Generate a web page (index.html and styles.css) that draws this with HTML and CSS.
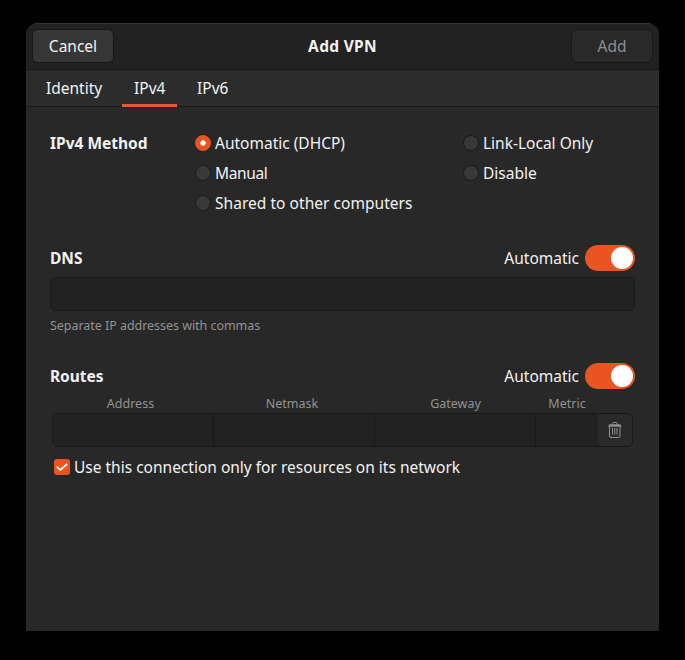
FILE: index.html
```html
<!DOCTYPE html>
<html lang="en">
<head>
<meta charset="utf-8">
<title>Add VPN</title>
<link rel="stylesheet" href="styles.css">
</head>
<body>
<main class="window">
  <header class="headerbar">
    <button class="button">Cancel</button>
    <h1 class="title">Add VPN</h1>
    <button class="button button-disabled" disabled>Add</button>
  </header>
  <nav class="tabs">
    <a class="tab tab-identity">Identity</a>
    <a class="tab tab-active">IPv4</a>
    <a class="tab">IPv6</a>
  </nav>
  <div class="page">
    <section class="methods">
      <h2 class="heading">IPv4 Method</h2>
      <div class="radio-column">
        <label class="option"><span class="radio radio-on"></span><span>Automatic (DHCP)</span></label>
        <label class="option"><span class="radio"></span><span class="label-manual">Manual</span></label>
        <label class="option"><span class="radio"></span><span class="label-shared">Shared to other computers</span></label>
      </div>
      <div class="radio-column">
        <label class="option"><span class="radio"></span><span>Link-Local Only</span></label>
        <label class="option"><span class="radio"></span><span>Disable</span></label>
      </div>
    </section>
    <section class="dns">
      <div class="section-head">
        <h2 class="heading">DNS</h2>
        <span class="auto">Automatic</span>
        <span class="switch"><span class="knob"></span></span>
      </div>
      <div class="entry"></div>
      <p class="hint">Separate IP addresses with commas</p>
    </section>
    <section class="routes">
      <div class="section-head">
        <h2 class="heading heading-routes">Routes</h2>
        <span class="auto">Automatic</span>
        <span class="switch"><span class="knob"></span></span>
      </div>
      <div class="columns column-names">
        <span>Address</span><span>Netmask</span><span>Gateway</span><span>Metric</span>
      </div>
      <div class="columns route-row">
        <span class="cell"></span><span class="cell"></span><span class="cell"></span><span class="cell cell-last"></span>
        <span class="delete">
          <svg width="14" height="16" viewBox="0 0 14 16" fill="none" stroke="#929292">
            <path d="M4.5 2.5V1.5Q4.5.5 5.5.5H8Q9 .5 9 1.5V2.5"/>
            <path d="M.3 4.8V4Q.3 2.2 2 2.2H11.5Q13.2 2.2 13.2 4V4.8Z" fill="#929292" stroke="none"/>
            <path d="M1.5 5V14Q1.5 15.5 3 15.5H10.5Q12 15.5 12 14V5"/>
            <path d="M4.5 6V12.5M6.75 6V12.5M9 6V12.5"/>
          </svg>
        </span>
      </div>
      <label class="check-row">
        <svg class="check" width="16" height="16" viewBox="0 0 16 16">
          <rect width="16" height="16" rx="3" fill="#e95420"/>
          <path d="M2.8 7.6L6.4 11L13.2 4.8" fill="none" stroke="#fff" stroke-width="1.7"/>
        </svg>
        <span>Use this connection only for resources on its network</span>
      </label>
    </section>
  </div>
</main>
</body>
</html>
```
FILE: styles.css
```css
* { box-sizing: border-box; }

body {
  margin: 0;
  height: 660px;
  padding: 23px 26px 29px;
  background: #000;
  color: #f2f2f2;
  font: 15.5px/20px "Noto Sans", sans-serif;
  overflow: hidden;
}

h1, h2, p { margin: 0; font-size: inherit; }

.window {
  height: 608px;
  background: #282828;
  border-radius: 12px 12px 0 0;
  overflow: hidden;
}

.headerbar {
  height: 47px;
  padding: 0 6px 1px;
  display: flex;
  align-items: center;
  justify-content: space-between;
  background: #222;
  border-bottom: 1px solid #181818;
  box-shadow: inset 0 1px #343434;
}

.title { font-weight: 700; font-size: 15.5px; letter-spacing: .3px; }

.button {
  width: 82px;
  height: 34px;
  padding: 0;
  border: 1px solid #181818;
  border-radius: 6px;
  background: #363636;
  color: #f2f2f2;
  font: inherit;
}

.button-disabled { background: #292929; color: #8e8e8e; }

.tabs {
  height: 37px;
  padding-left: 8px;
  display: flex;
  background: #2c2c2c;
  border-bottom: 1px solid #181818;
}

.tab { height: 37px; padding: 8px 12px 0; margin-right: 8px; white-space: nowrap; width: 55px; }
.tab-identity { width: 80px; }
.tab-active { border-bottom: 3px solid #e0592f; }

.page { padding: 26px 24px 0; }

.methods {
  display: grid;
  grid-template-columns: 145px 268px 1fr;
  height: 90px;
}

.heading { font-weight: 700; font-size: 15.5px; white-space: nowrap; }
.heading-routes { letter-spacing: -.05px; }

.radio-column { display: flex; flex-direction: column; gap: 10px; }

.option { display: flex; align-items: center; gap: 4px; height: 20px; white-space: nowrap; }

.label-manual { letter-spacing: -.35px; }
.label-shared { letter-spacing: .04px; }

.radio {
  width: 16px;
  height: 16px;
  flex: none;
  border-radius: 50%;
  border: 1px solid #1b1b1b;
  background: #383838;
}

.radio-on {
  border-color: #e95420;
  background: radial-gradient(circle, #fff 0 2.3px, #e95420 3.1px);
}

.dns { margin-top: 22px; }

.section-head { display: flex; align-items: center; height: 26px; }

.auto { margin-left: auto; margin-right: 6px; }

.switch {
  width: 50px;
  height: 26px;
  padding: 2px 1px 0 26px;
  border-radius: 13px;
  background: #e95420;
}

.knob { display: block; width: 22px; height: 22px; border-radius: 50%; background: #fff; }

.entry {
  height: 34px;
  margin-top: 6px;
  border: 1px solid #191919;
  border-radius: 6px;
  background: #222;
}

.hint { margin-top: 5px; font-size: 12.5px; line-height: 19px; letter-spacing: -.04px; color: #929292; }

.routes { margin-top: 28px; }

.columns { display: grid; grid-template-columns: 162px 161px 161px 62px 35px; margin: 0 2px; }

.column-names {
  height: 24px;
  padding-top: 5px;
  font-size: 12.5px;
  line-height: 19px;
  color: #929292;
}

.column-names span { text-align: center; padding-right: 5px; }
.column-names span:nth-child(3) { padding-right: 0; }
.column-names span:nth-child(4) { padding-right: 0; }

.route-row {
  height: 34px;
  border: 1px solid #191919;
  border-radius: 6px;
  overflow: hidden;
}

.columns.route-row { grid-template-columns: 161px 161px 161px 62px 1fr; }

.cell { background: #222; border-right: 1px solid #191919; }
.cell-last { border-right: 0; }

.delete { display: flex; align-items: center; justify-content: center; background: #2a2a2a; }

.check-row { display: flex; align-items: center; gap: 4px; height: 20px; margin: 10px 0 0 4px; white-space: nowrap; }
.check { flex: none; }
```
